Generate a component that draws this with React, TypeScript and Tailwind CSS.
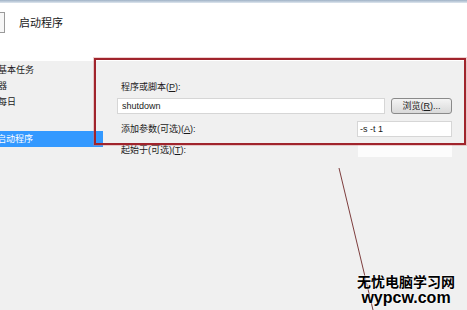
import React from 'react';

const font = '"Liberation Sans", "Noto Sans CJK SC", sans-serif';

const navItems = ['基本任务', '器', '每日'];

export default function App() {
  return (
    <div
      className="relative w-[467px] h-[310px] overflow-hidden bg-[#f0f0f0] text-[#1a1a1a]"
      style={{ fontFamily: font }}
    >
      {/* window frame edge */}
      <div className="h-[3px] bg-gradient-to-b from-[#9fb2c6] to-[#dfe7ef]" />

      {/* header */}
      <div className="h-[58px] bg-white flex items-start pt-[9px]">
        <div className="w-[5px] h-[21px] border border-l-0 border-[#9a9a9a] bg-[#f7f7f7]" />
        <div className="ml-[14px] mt-[4px] text-[11px] leading-[14px]">启动程序</div>
      </div>

      {/* body */}
      <div className="flex">
        {/* left nav */}
        <div className="w-[103px] pt-[1px] text-[9px]">
          {navItems.map((t) => (
            <div key={t} className="h-[16px] leading-[16px] -ml-[2px]">
              {t}
            </div>
          ))}
          <div className="h-[21px]" />
          <div className="h-[16px] leading-[16px] bg-[#3399ff] text-white">
            <span className="-ml-[3px]">启动程序</span>
          </div>
        </div>

        {/* form */}
        <div className="flex-1 pl-[18px] pr-[15px] pt-[20px] text-[9px]">
          <div className="h-[12px] leading-[12px]">程序或脚本(<span className="underline">P</span>):</div>
          <div className="mt-[5px] flex gap-[6px] -ml-[4px]">
            <div className="flex-1 h-[16px] bg-white border border-[#d6d6d6] pl-[4px] leading-[14px]">
              shutdown
            </div>
            <div className="w-[61px] h-[16px] rounded-[3px] border border-[#8a8a8a] bg-gradient-to-b from-[#f4f4f4] to-[#d9d9d9] text-center leading-[14px]">
              浏览(<span className="underline">R</span>)...
            </div>
          </div>
          <div className="mt-[7px] flex items-center justify-between h-[16px]">
            <div className="leading-[12px]">添加参数(可选)(<span className="underline">A</span>):</div>
            <div className="w-[95px] h-[16px] bg-white border border-[#d6d6d6] pl-[2px] leading-[14px]">
              -s -t 1
            </div>
          </div>
          <div className="mt-[4px] flex items-start justify-between h-[18px]">
            <div className="leading-[12px] mt-[3px]">起始于(可选)(<span className="underline">T</span>):</div>
            <div className="w-[94px] h-[12px] mt-[4px] bg-white/80" />
          </div>
        </div>
      </div>

      {/* red annotation box */}
      <div className="absolute left-[94px] top-[58px] w-[372px] h-[87px] border-2 border-[#a0242c] shadow-[0_0_0_1px_rgba(210,120,120,0.35)]" />

      {/* annotation line */}
      <svg className="absolute left-0 top-0" width="467" height="310">
        <line x1="339" y1="168" x2="373" y2="310" stroke="#7d3d3d" strokeWidth="1" />
      </svg>

      {/* watermark */}
      <div
        className="absolute left-[354px] top-[275px] w-[104px] text-center font-bold text-black"
        style={{ textShadow: '0 0 2px #fff, 0 0 2px #fff' }}
      >
        <div className="text-[14px] leading-[15px]">无忧电脑学习网</div>
        <div className="text-[16px] leading-[16px]">wypcw.com</div>
      </div>
    </div>
  );
}
